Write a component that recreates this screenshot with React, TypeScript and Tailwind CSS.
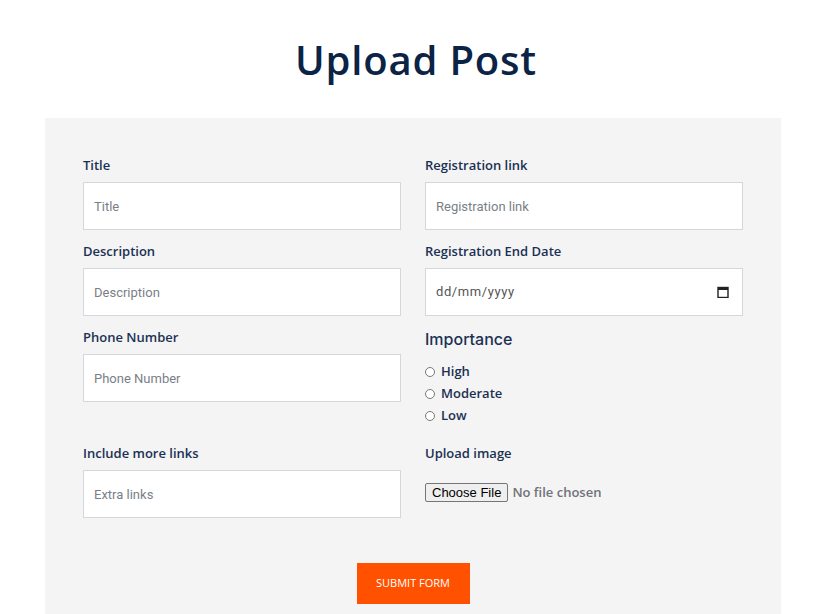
import React from "react";

const labelCls = "block text-[13px] font-semibold leading-[18px] text-[#1b3153] mb-2";
const inputCls =
  "w-full h-[48px] bg-white border border-[#d3d7de] px-[10px] text-[13px] text-[#333] placeholder:text-[#7a7f87] outline-none";

function Field({ label, placeholder, type = "text" }: { label: string; placeholder: string; type?: string }) {
  return (
    <div>
      <label className={labelCls}>{label}</label>
      <input type={type} placeholder={placeholder} className={inputCls} style={{ fontFamily: "Roboto, sans-serif" }} />
    </div>
  );
}

export default function App() {
  return (
    <div className="min-h-[614px] bg-white" style={{ fontFamily: "'Open Sans', sans-serif" }}>
      <h1 className="pt-[34px] h-[118px] text-center text-[40px] leading-[52px] font-semibold tracking-[0.8px] text-[#0b2344]">
        Upload Post
      </h1>
      <div className="ml-[45px] w-[736px] bg-[#f4f4f4] px-[38px] pt-[38px] pb-[20px]">
        <div className="grid grid-cols-2 gap-x-6 gap-y-3">
          <Field label="Title" placeholder="Title" />
          <Field label="Registration link" placeholder="Registration link" />
          <Field label="Description" placeholder="Description" />
          <div>
            <label className={labelCls}>Registration End Date</label>
            <div
              className="w-full h-[48px] bg-white border border-[#d3d7de] pl-[10px] pr-[13px] flex items-center justify-between text-[13px] tracking-[0.6px] text-[#555]"
              style={{ fontFamily: "Roboto, sans-serif" }}
            >
              <span>dd/mm/yyyy</span>
              <svg width="12" height="12" viewBox="0 0 12 12">
                <rect x="1" y="1.5" width="10" height="10" fill="none" stroke="#222" strokeWidth="1.4" />
                <rect x="1" y="1.5" width="10" height="2.5" fill="#222" />
              </svg>
            </div>
          </div>
          <Field label="Phone Number" placeholder="Phone Number" />
          <div className="pb-[5px]">
            <div
              className="text-[16px] font-medium leading-[22px] text-[#1b3153] mb-[11px]"
              style={{ fontFamily: "Inter, sans-serif" }}
            >
              Importance
            </div>
            <div className="flex flex-col">
              {["High", "Moderate", "Low"].map((o) => (
                <label key={o} className="flex items-center h-[22px] text-[13px] font-semibold text-[#1b3153]">
                  <input type="radio" name="imp" className="w-[10px] h-[10px] mr-[6px]" />
                  {o}
                </label>
              ))}
            </div>
          </div>
          <Field label="Include more links" placeholder="Extra links" />
          <div>
            <label className={labelCls}>Upload image</label>
            <div className="h-[46px] flex items-center">
              <input
                type="file"
                className="text-[13px] font-semibold text-[#6f7378] file:mr-[4px] file:border file:border-[#767676] file:bg-[#efefef] file:rounded-[2px] file:px-[6px] file:py-0 file:leading-[17px] file:text-[13px] file:text-black file:font-normal file:font-['Liberation_Sans',sans-serif]"
              />
            </div>
          </div>
        </div>
        <div className="flex justify-center mt-[45px]">
          <button className="w-[113px] h-[41px] bg-[#ff5100] text-white text-[11px] font-medium">SUBMIT FORM</button>
        </div>
      </div>
    </div>
  );
}
